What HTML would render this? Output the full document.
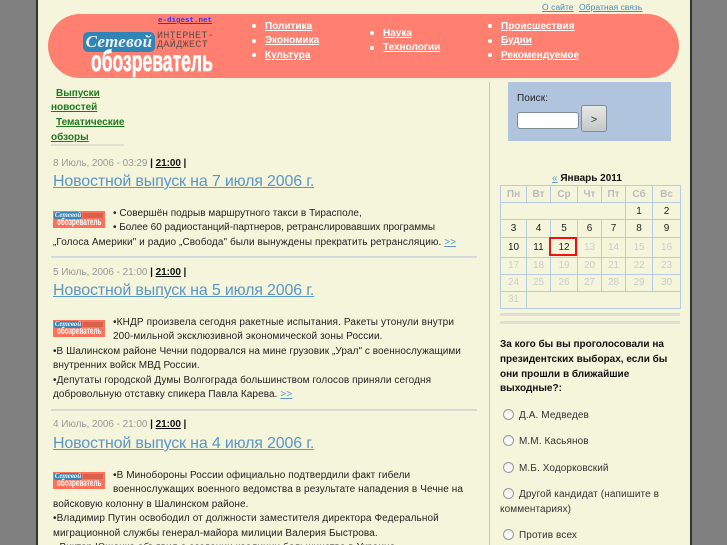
<!DOCTYPE html>
<html><head><meta charset="utf-8">
<style>
html,body{margin:0;padding:0;width:727px;height:545px;overflow:hidden;background:#808080;font-family:"Liberation Sans",sans-serif;}
#w{position:relative;width:727px;height:545px;overflow:hidden;background:#808080}
#p{position:absolute;left:36px;top:0;width:652px;height:545px;background:#f5f5dc;border-left:2px solid #333;border-right:2px solid #333}
.a{position:absolute;white-space:nowrap}
.t{position:absolute;white-space:nowrap;font-size:10px;line-height:14px;color:#222;letter-spacing:.08px;margin-top:1px}
.h{position:absolute;white-space:nowrap;font-size:16px;line-height:20px;color:#5b96c8;text-decoration:underline;letter-spacing:-.17px;margin-top:1px}
.d{position:absolute;white-space:nowrap;font-size:10px;line-height:14px;color:#999;letter-spacing:-.06px;margin-top:1px}
.d b{color:#111}.d b u{color:#111}
.m{position:absolute;white-space:nowrap;font-size:10px;font-weight:bold;line-height:14px;color:#fff;text-decoration:underline;margin-top:1px}
.dot{position:absolute;width:4px;height:4px;border-radius:50%;background:#fff}
.g{position:absolute;white-space:nowrap;font-size:10px;font-weight:bold;line-height:14px;color:#1f7a1f;text-decoration:underline;margin-top:1px}
.l{position:absolute;background:#dcdcd0;border-top:1px solid #cfd6dc;height:1px}
.lg{position:absolute;left:53px;width:52px;height:17px;background:#ff7058;overflow:hidden}
.lg i{position:absolute;left:1px;top:1px;width:28px;height:7px;background:#3a85b5;border-radius:2px;color:#e8f2f8;font:italic bold 7px/7px "Liberation Serif",serif;text-align:center}
.lg b{position:absolute;left:4px;top:7px;color:#fff;font:bold 10px/10px "Liberation Sans",sans-serif;transform-origin:0 0;transform:scaleX(.64)}
.lg s{position:absolute;left:30px;top:2px;width:20px;height:5px;background:#d8604c;text-decoration:none}
table{position:absolute;left:500px;top:185px;width:180px;height:124px;border-collapse:collapse;table-layout:fixed}
td,th{border:1px solid #b8cce0;padding:1px 0 0;text-align:center;font-size:10px;color:#ccc;font-weight:normal;line-height:12px}
th{font-weight:bold;color:#bbb}
td.n{color:#222}
.r{position:absolute;width:9px;height:9px;border-radius:50%;background:linear-gradient(#eee,#fff);border:1.5px solid #999}
.q{position:absolute;white-space:nowrap;font-size:10px;font-weight:bold;line-height:14px;color:#111;margin-top:1px}
.o{position:absolute;white-space:nowrap;font-size:10px;line-height:14px;color:#333;letter-spacing:.1px;margin-top:1px}
</style></head><body>
<div id="w">
<div id="p"></div>

<div class="a" style="left:542px;top:1px;font-size:8.6px;line-height:12px;color:#4a8ab8;text-decoration:underline">О сайте</div>
<div class="a" style="left:579px;top:1px;font-size:8.6px;line-height:12px;color:#4a8ab8;text-decoration:underline">Обратная связь</div>

<div class="a" style="left:48px;top:14px;width:631px;height:64px;border-radius:32px;background:#ff8070"></div>
<div class="a" style="left:158px;top:16px;font:bold 7.5px/10px 'Liberation Mono',monospace;color:#3333ff;text-decoration:underline">e-digest.net</div>
<div class="a" style="left:83px;top:32px;width:72px;height:20px;background:#3284b4;border-radius:5px;color:#e8f2f8;font:italic bold 17px/20px 'Liberation Serif',serif;text-align:center;letter-spacing:.3px">Сетевой</div>
<div class="a" style="left:157px;top:31px;font:10px/12px 'Liberation Mono',monospace;color:#5a4a48;letter-spacing:.33px">ИНТЕРНЕТ-</div>
<div class="a" style="left:157px;top:40px;font:10px/12px 'Liberation Mono',monospace;color:#5a4a48;letter-spacing:.4px">ДАЙДЖЕСТ</div>
<div class="a" style="left:91px;top:44px;color:#fff;font:bold 30px/36px 'Liberation Sans',sans-serif;transform-origin:0 0;transform:scaleX(.585);-webkit-text-stroke:.6px #fff">обозреватель</div>

<div class="dot" style="left:252px;top:24px"></div><div class="m" style="left:265px;top:19px">Политика</div>
<div class="dot" style="left:252px;top:39px"></div><div class="m" style="left:265px;top:33px">Экономика</div>
<div class="dot" style="left:252px;top:53px"></div><div class="m" style="left:265px;top:48px">Культура</div>
<div class="dot" style="left:370px;top:31px"></div><div class="m" style="left:383px;top:26px">Наука</div>
<div class="dot" style="left:370px;top:46px"></div><div class="m" style="left:383px;top:40px">Технологии</div>
<div class="dot" style="left:488px;top:24px"></div><div class="m" style="left:501px;top:19px">Происшествия</div>
<div class="dot" style="left:488px;top:39px"></div><div class="m" style="left:501px;top:33px">Будни</div>
<div class="dot" style="left:488px;top:53px"></div><div class="m" style="left:501px;top:48px">Рекомендуемое</div>

<div class="g" style="left:56px;top:86px">Выпуски</div>
<div class="g" style="left:51px;top:100px">новостей</div>
<div class="g" style="left:56px;top:115px">Тематические</div>
<div class="g" style="left:51px;top:130px">обзоры</div>
<div class="a" style="left:51px;top:144px;width:73px;height:2px;background:#dfdfd2"></div>

<div class="a" style="left:489px;top:82px;width:1px;height:463px;background:#d4c8a0"></div>

<!-- item 1 -->
<div class="d" style="left:53px;top:156px">8 Июль, 2006 - 03:29 <b>| <u>21:00</u> |</b></div>
<div class="h" style="left:53px;top:171px">Новостной выпуск на 7 июля 2006 г.</div>
<div class="lg" style="top:211px"><i>Сетевой</i><s></s><b>обозреватель</b></div>
<div class="t" style="left:113px;top:206px;letter-spacing:.04px">• Совершён подрыв маршрутного такси в Тирасполе,</div>
<div class="t" style="left:113px;top:220px;letter-spacing:-.03px">• Более 60 радиостанций-партнеров, ретранслировавших программы</div>
<div class="t" style="left:53px;top:235px">„Голоса Америки" и радио „Свобода" были вынуждены прекратить ретрансляцию. <span style="color:#5b96c8;text-decoration:underline">&gt;&gt;</span></div>
<div class="l" style="left:51px;top:256px;width:426px"></div>

<!-- item 2 -->
<div class="d" style="left:53px;top:265px">5 Июль, 2006 - 21:00 <b>| <u>21:00</u> |</b></div>
<div class="h" style="left:53px;top:280px">Новостной выпуск на 5 июля 2006 г.</div>
<div class="lg" style="top:320px"><i>Сетевой</i><s></s><b>обозреватель</b></div>
<div class="t" style="left:113px;top:315px;letter-spacing:.14px">•КНДР произвела сегодня ракетные испытания. Ракеты утонули внутри</div>
<div class="t" style="left:113px;top:329px;letter-spacing:.1px">200-мильной эксклюзивной экономической зоны России.</div>
<div class="t" style="left:53px;top:344px;letter-spacing:.05px">•В Шалинском районе Чечни подорвался на мине грузовик „Урал" с военнослужащими</div>
<div class="t" style="left:53px;top:358px">внутренних войск МВД России.</div>
<div class="t" style="left:53px;top:373px">•Депутаты городской Думы Волгограда большинством голосов приняли сегодня</div>
<div class="t" style="left:53px;top:387px">добровольную отставку спикера Павла Карева. <span style="color:#5b96c8;text-decoration:underline">&gt;&gt;</span></div>
<div class="l" style="left:51px;top:409px;width:426px"></div>

<!-- item 3 -->
<div class="d" style="left:53px;top:417px">4 Июль, 2006 - 21:00 <b>| <u>21:00</u> |</b></div>
<div class="h" style="left:53px;top:433px">Новостной выпуск на 4 июля 2006 г.</div>
<div class="lg" style="top:472px"><i>Сетевой</i><s></s><b>обозреватель</b></div>
<div class="t" style="left:113px;top:468px">•В Минобороны России официально подтвердили факт гибели</div>
<div class="t" style="left:113px;top:482px;letter-spacing:.1px">военнослужащих военного ведомства в результате нападения в Чечне на</div>
<div class="t" style="left:53px;top:497px">войсковую колонну в Шалинском районе.</div>
<div class="t" style="left:53px;top:511px;letter-spacing:.11px">•Владимир Путин освободил от должности заместителя директора Федеральной</div>
<div class="t" style="left:53px;top:526px">миграционной службы генерал-майора милиции Валерия Быстрова.</div>
<div class="t" style="left:53px;top:540px">• Виктор Ющенко объявил о создании коалиции большинства в Украине</div>

<!-- search -->
<div class="a" style="left:508px;top:82px;width:163px;height:59px;background:#b0c4de"></div>
<div class="a" style="left:517px;top:91px;font-size:10px;line-height:14px;color:#222;letter-spacing:.1px;margin-top:1px">Поиск:</div>
<div class="a" style="left:517px;top:112px;width:60px;height:15px;background:#fff;border:1px solid #7f8a99;border-radius:3px"></div>
<div class="a" style="left:581px;top:105px;width:24px;height:25px;background:linear-gradient(#e8e8e6,#c4c8c8);border:1px solid #808a96;border-radius:3px;text-align:center;font-size:11px;line-height:28px;color:#333">&gt;</div>

<!-- calendar -->
<div class="a" style="left:552px;top:172px;font-size:10px;line-height:14px;font-weight:bold;color:#111"><span style="color:#5b96c8;text-decoration:underline;font-weight:normal">«</span> Январь 2011</div>
<table>
<colgroup><col style="width:26px"><col style="width:24px"><col style="width:27px"><col style="width:24px"><col style="width:24px"><col style="width:27px"><col style="width:28px"></colgroup>
<tr style="height:17px"><th>Пн</th><th>Вт</th><th>Ср</th><th>Чт</th><th>Пт</th><th>Сб</th><th>Вс</th></tr>
<tr style="height:17px"><td colspan="5"></td><td class="n">1</td><td class="n">2</td></tr>
<tr style="height:18px"><td class="n">3</td><td class="n">4</td><td class="n">5</td><td class="n">6</td><td class="n">7</td><td class="n">8</td><td class="n">9</td></tr>
<tr style="height:19px"><td class="n">10</td><td class="n">11</td><td class="n">12</td><td>13</td><td>14</td><td>15</td><td>16</td></tr>
<tr style="height:17px"><td>17</td><td>18</td><td>19</td><td>20</td><td>21</td><td>22</td><td>23</td></tr>
<tr style="height:17px"><td>24</td><td>25</td><td>26</td><td>27</td><td>28</td><td>29</td><td>30</td></tr>
<tr style="height:17px"><td>31</td><td colspan="6"></td></tr>
</table>
<div class="a" style="left:549px;top:237px;width:24px;height:15px;border:2px solid #f01010"></div>
<div class="a" style="left:500px;top:313px;width:180px;height:3px;background:#dfdfd2"></div>
<div class="a" style="left:500px;top:321px;width:180px;height:3px;background:#dfdfd2"></div>

<!-- poll -->
<div class="q" style="left:500px;top:337px">За кого бы вы проголосовали на</div>
<div class="q" style="left:500px;top:352px">президентских выборах, если бы</div>
<div class="q" style="left:500px;top:367px">они прошли в ближайшие</div>
<div class="q" style="left:500px;top:381px">выходные?:</div>
<div class="r" style="left:503px;top:409px"></div><div class="o" style="left:519px;top:408px">Д.А. Медведев</div>
<div class="r" style="left:503px;top:435px"></div><div class="o" style="left:519px;top:434px">М.М. Касьянов</div>
<div class="r" style="left:503px;top:462px"></div><div class="o" style="left:519px;top:461px">М.Б. Ходорковский</div>
<div class="r" style="left:503px;top:488px"></div><div class="o" style="left:519px;top:487px">Другой кандидат (напишите в</div>
<div class="o" style="left:500px;top:502px">комментариях)</div>
<div class="r" style="left:503px;top:529px"></div><div class="o" style="left:519px;top:528px">Против всех</div>
</div>
</body></html>
